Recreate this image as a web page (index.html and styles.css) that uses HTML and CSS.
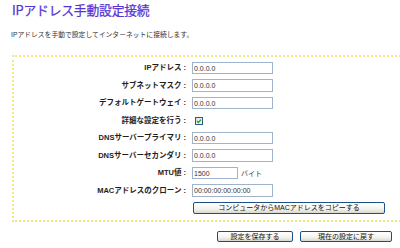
FILE: index.html
```html
<!DOCTYPE html>
<html>

<head>
    <title>IPアドレス手動設定接続</title>
    <meta charset="UTF-8">
    <link rel="stylesheet" href="styles.css">
</head>

<body>
    <h1 class="title">IPアドレス手動設定接続</h1>
    <p class="lead">IPアドレスを手動で設定してインターネットに接続します。</p>

    <div class="panel">
        <div class="form-grid">
            <span class="field-label">IPアドレス :</span>
            <div class="field"><input class="text-input" type="text" value="0.0.0.0"></div>

            <span class="field-label">サブネットマスク :</span>
            <div class="field"><input class="text-input" type="text" value="0.0.0.0"></div>

            <span class="field-label">デフォルトゲートウェイ :</span>
            <div class="field"><input class="text-input" type="text" value="0.0.0.0"></div>

            <span class="field-label">詳細な設定を行う :</span>
            <div class="field">
                <span class="check">
                    <svg width="8" height="8" viewBox="0 0 8 8">
                        <defs>
                            <linearGradient id="cbg" x1="0" y1="0" x2="1" y2="1">
                                <stop offset="0" stop-color="#dcdcd4"/>
                                <stop offset="1" stop-color="#ffffff"/>
                            </linearGradient>
                        </defs>
                        <rect x="0.5" y="0.5" width="7" height="7" fill="url(#cbg)" stroke="#2a5a8c"/>
                        <path d="M2 4 L3.4 5.5 L6 2.6" fill="none" stroke="#21a121" stroke-width="1.3"/>
                    </svg>
                </span>
            </div>

            <span class="field-label">DNSサーバープライマリ :</span>
            <div class="field"><input class="text-input" type="text" value="0.0.0.0"></div>

            <span class="field-label">DNSサーバーセカンダリ :</span>
            <div class="field"><input class="text-input" type="text" value="0.0.0.0"></div>

            <span class="field-label">MTU値 :</span>
            <div class="field"><input class="text-input short" type="text" value="1500"><span class="unit">バイト</span></div>

            <span class="field-label">MACアドレスのクローン :</span>
            <div class="field"><input class="text-input" type="text" value="00:00:00:00:00:00"></div>

            <span class="field-label"></span>
            <div class="field"><button class="btn btn-copy">コンピュータからMACアドレスをコピーする</button></div>
        </div>
    </div>

    <div class="actions">
        <button class="btn btn-save">設定を保存する</button>
        <button class="btn btn-reset">現在の設定に戻す</button>
    </div>
</body></html>
```

FILE: styles.css
```css
* {
    padding: 0px;
    margin: 0px;
    box-sizing: border-box;
}

html,
body {
    overflow: hidden;
}

body {
    font-family: "Liberation Sans", "Noto Sans CJK JP", sans-serif;
    background: white;
    color: #222;
    padding-left: 12px;
}

.title {
    font-family: "Noto Sans CJK JP", sans-serif;
    font-size: 12.8px;
    font-weight: normal;
    line-height: 20px;
    height: 20px;
    color: #5634d4;
    letter-spacing: -0.2px;
    -webkit-text-stroke: 0.25px #5634d4;
}

.lead {
    margin-top: 10px;
    margin-left: -1px;
    font-size: 6.8px;
    line-height: 10px;
    height: 10px;
    color: #333;
}

.panel {
    margin-top: 15px;
    width: 400px;
    border: 2px dotted #ecea84;
    padding: 5px 0 6px 0;
}

.form-grid {
    display: grid;
    grid-template-columns: 172px 1fr;
    grid-auto-rows: 12px;
    column-gap: 6px;
    row-gap: 5.5px;
}

.field-label {
    text-align: right;
    font-size: 7.5px;
    font-weight: bold;
    line-height: 12px;
    color: #1e1e1e;
    white-space: nowrap;
}

.field {
    display: flex;
    align-items: center;
    height: 12px;
}

.text-input {
    width: 81px;
    height: 12.5px;
    border: 1px solid #9fb3cb;
    font-family: "Liberation Sans", sans-serif;
    font-size: 7px;
    color: #333;
    padding-left: 1px;
    background: white;
    outline: none;
}

.text-input.short {
    width: 46px;
}

.unit {
    font-size: 7px;
    margin-left: 3px;
    color: #333;
}

.check {
    display: block;
    width: 8px;
    height: 8px;
    margin-left: 3px;
}

.check svg {
    display: block;
}

.btn {
    font-family: "Liberation Sans", "Noto Sans CJK JP", sans-serif;
    font-size: 7px;
    color: #111;
    height: 12px;
    border: 1px solid #1d4f86;
    border-radius: 2px;
    background: linear-gradient(#ffffff, #f3f3ee 60%, #d8d8d0);
    line-height: 10px;
}

.btn-copy {
    width: 192px;
    margin-left: 1px;
}

.actions {
    display: flex;
    justify-content: flex-end;
    gap: 7px;
    margin-top: 8.5px;
    padding-right: 8px;
}

.actions .btn {
    height: 11px;
    line-height: 9px;
}

.btn-save {
    width: 76px;
}

.btn-reset {
    width: 92px;
}
```
